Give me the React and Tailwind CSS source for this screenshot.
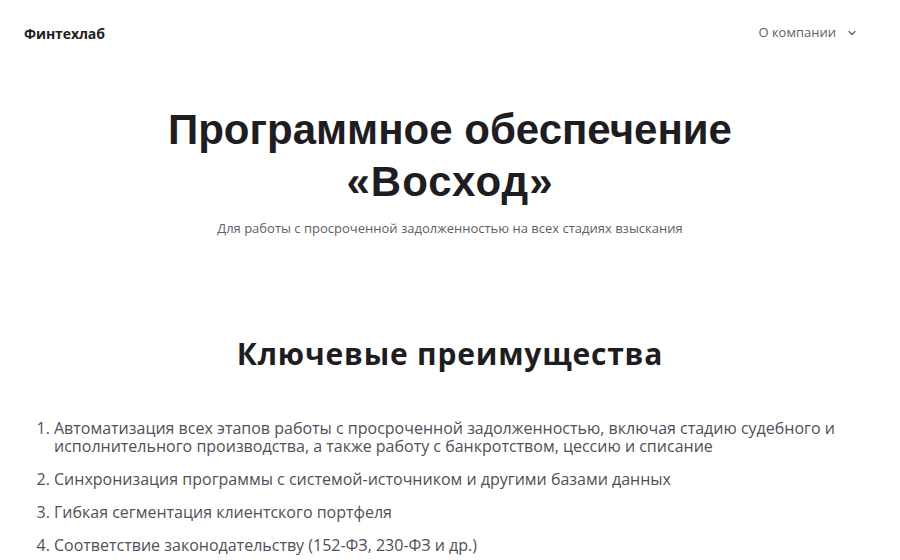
import { ChevronDown } from "lucide-react";

const advantages = [
  "Автоматизация всех этапов работы с просроченной задолженностью, включая стадию судебного и исполнительного производства, а также работу с банкротством, цессию и списание",
  "Синхронизация программы с системой-источником и другими базами данных",
  "Гибкая сегментация клиентского портфеля",
  "Соответствие законодательству (152-ФЗ, 230-ФЗ и др.)",
];

export default function App() {
  return (
    <div className="min-h-screen bg-white text-[#1d1d22] font-['Open_Sans',sans-serif]">
      <header className="flex items-center justify-between h-[66px] pl-6 pr-[42px]">
        <span className="text-[14px] font-bold tracking-[-0.1px]">Финтехлаб</span>
        <button className="flex items-center gap-[10px] text-[13px] text-[#5f6066]">
          О компании
          <ChevronDown size={12} strokeWidth={2.5} />
        </button>
      </header>

      <section className="flex flex-col items-center pt-[38px] text-center">
        <h1 className="font-['Liberation_Sans',Arial,sans-serif] text-[42px] font-bold leading-[52px]">
          Программное обеспечение
          <br />
          <span className="tracking-[1px]">«Восход»</span>
        </h1>
        <p className="mt-[11px] text-[13px] text-[#5f6066]">
          Для работы с просроченной задолженностью на всех стадиях взыскания
        </p>
      </section>

      <section className="pt-[92px]">
        <h2 className="text-center text-[30px] font-bold leading-[45px] tracking-[0.8px]">
          Ключевые преимущества
        </h2>
        <ol className="mt-[43px] list-decimal pl-[54px] pr-10 text-[16px] leading-[18px] text-[#4f5058]">
          {advantages.map((item) => (
            <li key={item} className="mb-[15px]">
              {item}
            </li>
          ))}
        </ol>
      </section>
    </div>
  );
}
